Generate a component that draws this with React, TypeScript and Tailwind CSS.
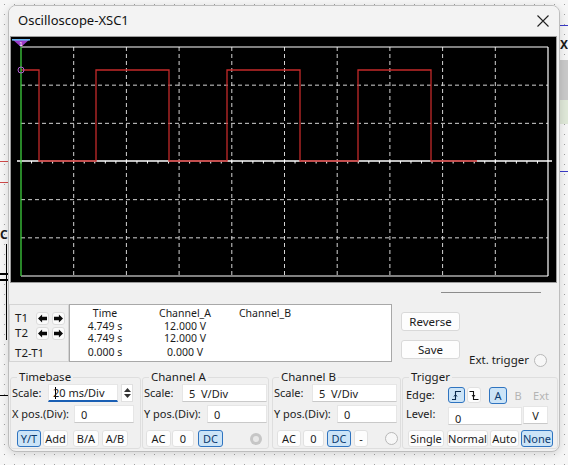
import React from "react";

// grid geometry inside the black screen (coords relative to screen origin 10,36)
const GX0 = 11;
const GX1 = 538;
const GY0 = 11;
const GY1 = 240;
const AXIS_Y = 125;

const vLines = Array.from({ length: 9 }, (_, i) => GX0 + ((i + 1) * (GX1 - GX0)) / 10);
const hLines = [1, 2, 4, 5].map((j) => GY0 + (j * (GY1 - GY0)) / 6);
const ticks = Array.from({ length: 50 }, (_, i) => GX0 + (i * (GX1 - GX0)) / 50);

const wave =
  "11,34 29,34 29,125 86,125 86,34 159,34 159,125 217,125 217,34 290,34 290,125 348,125 348,34 421,34 421,125 467,125";

function Screen() {
  return (
    <div className="w-[547px] h-[247px] ml-px bg-black border border-[#9c9c9c]">
      <svg width="545" height="245" viewBox="1 1 545 245" className="block">
        {vLines.map((x) => (
          <line key={x} x1={x} y1={GY0} x2={x} y2={GY1} stroke="#d4d4d4" strokeWidth="1" strokeDasharray="4 3" />
        ))}
        {hLines.map((y) => (
          <line key={y} x1={GX0} y1={y} x2={GX1} y2={y} stroke="#d4d4d4" strokeWidth="1" strokeDasharray="4 3" />
        ))}
        <line x1={GX0} y1={GY0} x2={GX1} y2={GY0} stroke="#ffffff" strokeWidth="1.2" />
        <line x1={GX1} y1={GY0} x2={GX1} y2={GY1} stroke="#ffffff" strokeWidth="1.2" />
        <line x1={GX0} y1={GY1} x2={GX1} y2={GY1} stroke="#ffffff" strokeWidth="1.2" />
        <line x1="7" y1={AXIS_Y} x2="542" y2={AXIS_Y} stroke="#ffffff" strokeWidth="1.3" />
        {ticks.map((x) => (
          <line key={x} x1={x} y1={AXIS_Y} x2={x} y2={AXIS_Y + 2.5} stroke="#ffffff" strokeWidth="1" />
        ))}
        <polyline points={wave} fill="none" stroke="#c42a2a" strokeWidth="1.3" />
        <line x1={GX0} y1="6" x2={GX0} y2={GY1} stroke="#3fcf3f" strokeWidth="1.3" />
        <circle cx={GX0} cy="34" r="3" fill="none" stroke="#b060d0" strokeWidth="1" />
        <polygon points="2,3 20,3 11,11" fill="#9a3cc8" />
        <rect x="2" y="3" width="18" height="1.6" fill="#6ab6f0" />
        <text x="11" y="9.5" fontSize="6" fill="#ffffff" textAnchor="middle" fontFamily="Liberation Sans, sans-serif">
          1
        </text>
      </svg>
    </div>
  );
}

function Arrow({ dir }: { dir: "l" | "r" }) {
  return (
    <div className="w-[13px] h-[13px] rounded-[3px] bg-[#fbfbfb] border border-[#dcdcdc] flex items-center justify-center">
      <svg width="9" height="9" viewBox="0 0 11 10">
        {dir === "l" ? (
          <polygon points="0,5 5,0 5,3 11,3 11,7 5,7 5,10" fill="#0a0a0a" />
        ) : (
          <polygon points="11,5 6,0 6,3 0,3 0,7 6,7 6,10" fill="#0a0a0a" />
        )}
      </svg>
    </div>
  );
}

function Btn({ children, w, on, dim }: { children: React.ReactNode; w: string; on?: boolean; dim?: boolean }) {
  return (
    <div
      className={`${w} h-[17px] rounded-[3px] border flex items-center justify-center text-[11px] leading-none whitespace-nowrap ${
        on
          ? "bg-[#cce4f7] border-[#2f74c0] text-[#0b3a6e]"
          : dim
          ? "bg-[#f0f0f0] border-[#f0f0f0] text-[#b4b4b4]"
          : "bg-[#fdfdfd] border-[#e1e1e1] text-[#1a1a1a]"
      }`}
    >
      {children}
    </div>
  );
}

function Field({ w, children, focus }: { w: string; children?: React.ReactNode; focus?: boolean }) {
  return (
    <div
      className={`${w} h-[18px] bg-white border border-[#e6e6e6] flex items-center pl-[6px] text-[11px] leading-none whitespace-nowrap ${
        focus ? "border-b-2 border-b-[#1a5fb4]" : "border-b-[#c9c9c9]"
      }`}
    >
      {children}
    </div>
  );
}

function Group({ title, w, children }: { title: string; w: string; children: React.ReactNode }) {
  return (
    <fieldset className={`${w} h-[80px] border border-[#dedede] rounded-[3px] pl-px pr-px`}>
      <legend className="ml-[5px] px-[2px] text-[11.5px] leading-[16px]">{title}</legend>
      <div className="-mt-px flex flex-col">{children}</div>
    </fieldset>
  );
}

function Radio({ gray }: { gray?: boolean }) {
  return gray ? (
    <div className="w-[12px] h-[12px] rounded-full bg-[#c6c6c6] flex items-center justify-center">
      <div className="w-[6px] h-[6px] rounded-full bg-[#e8e8e8]" />
    </div>
  ) : (
    <div className="w-[13px] h-[13px] rounded-full bg-[#f7f7f7] border border-[#b8b8b8]" />
  );
}

// dotted schematic canvas behind the window
function Canvas() {
  return (
    <svg className="absolute inset-0" width="568" height="465">
      <defs>
        <pattern id="dots" width="10" height="10" patternUnits="userSpaceOnUse">
          <rect x="4" y="4" width="1" height="1" fill="#a0a0a0" />
        </pattern>
      </defs>
      <rect width="568" height="465" fill="#f6f6f6" />
      <rect width="568" height="465" fill="url(#dots)" />
      <line x1="0" y1="161.5" x2="10" y2="161.5" stroke="#d04a4a" />
      <line x1="0" y1="182.5" x2="10" y2="182.5" stroke="#d04a4a" />
      <line x1="6.5" y1="244" x2="6.5" y2="340" stroke="#000" />
      <line x1="0" y1="274" x2="10" y2="274" stroke="#000" strokeWidth="2" />
      <line x1="0" y1="280" x2="10" y2="280" stroke="#000" strokeWidth="2" />
      <line x1="0" y1="395.5" x2="10" y2="395.5" stroke="#000" />
      <line x1="560" y1="25.5" x2="568" y2="25.5" stroke="#3a3ac8" />
      <rect x="560" y="60" width="8" height="40" fill="#c9c9c9" />
      <rect x="560" y="100" width="8" height="24" fill="#dfe8d8" />
      <line x1="560" y1="171.5" x2="568" y2="171.5" stroke="#3a3ac8" />
    </svg>
  );
}

export default function App() {
  return (
    <div className="relative w-[568px] h-[465px] overflow-hidden bg-[#f6f6f6] pl-[8px] pt-[5px] font-['Noto_Sans',sans-serif] text-[11px] text-[#1b1b1b]">
      <Canvas />
      <div className="absolute left-0 top-[229px] text-[12px] font-bold leading-none">C</div>
      <div className="absolute left-[560px] top-[39px] text-[12px] font-bold leading-none">X</div>

      {/* oscilloscope window */}
      <div className="relative w-[552px] h-[447px] rounded-[8px] border border-[#bdbdbd] bg-[#f0f0f0] shadow-[0_2px_8px_rgba(0,0,0,0.14)] flex flex-col overflow-hidden">
        <div className="h-[30px] flex items-center justify-between pl-[9px] pr-[10px] bg-[#f3f3f3]">
          <span className="text-[13px] text-[#111]">Oscilloscope-XSC1</span>
          <svg width="12" height="12" viewBox="0 0 12 12">
            <path d="M0.5 0.5 11.5 11.5 M11.5 0.5 0.5 11.5" stroke="#222" strokeWidth="1.1" />
          </svg>
        </div>

        <Screen />

        <div className="h-[21px] flex justify-end">
          <div className="w-[100px] h-px bg-[#8c8c8c] mt-[9px] mr-[18px]" />
        </div>

        <div className="h-[58px] flex">
          <div className="w-[60px] h-[58px] border border-[#d4d4d4] pl-[5px] pt-[6px] text-[11.5px]">
            <div className="h-[14px] flex items-center">
              <span className="w-[21px] leading-none">T1</span>
              <Arrow dir="l" />
              <div className="w-[3px]" />
              <Arrow dir="r" />
            </div>
            <div className="h-[14px] mt-px flex items-center">
              <span className="w-[21px] leading-none">T2</span>
              <Arrow dir="l" />
              <div className="w-[3px]" />
              <Arrow dir="r" />
            </div>
            <div className="h-[14px] mt-[6px] flex items-center leading-none">T2-T1</div>
          </div>
          <div className="w-[323px] h-[58px] bg-white border border-[#a8a8a8] pt-[2px] text-[10.5px] leading-[12.5px] flex">
            <div className="w-[70px] text-center">
              <div>Time</div>
              <div>4.749 s</div>
              <div>4.749 s</div>
              <div className="mt-px">0.000 s</div>
            </div>
            <div className="w-[90px] text-center">
              <div>Channel_A</div>
              <div>12.000 V</div>
              <div>12.000 V</div>
              <div className="mt-px">0.000 V</div>
            </div>
            <div className="w-[70px] text-center">
              <div>Channel_B</div>
            </div>
          </div>
          <div className="ml-[9px] w-[59px] pt-[8px] flex flex-col gap-[9px]">
            <div className="h-[19px] rounded-[3px] border border-[#d9d9d9] bg-[#fdfdfd] flex items-center justify-center text-[11.5px]">
              Reverse
            </div>
            <div className="h-[19px] rounded-[3px] border border-[#d9d9d9] bg-[#fdfdfd] flex items-center justify-center text-[11.5px]">
              Save
            </div>
          </div>
          <div className="ml-[9px] flex items-end">
            <div className="flex items-center gap-[5px] translate-y-[5px]">
              <span className="text-[11.5px] leading-[14px]">Ext. trigger</span>
              <Radio />
            </div>
          </div>
        </div>

        <div className="mt-[7px] flex pl-px">
          <Group title="Timebase" w="w-[131px]">
            <div className="h-[18px] flex items-center">
              <span className="w-[36px]">Scale:</span>
              <Field w="w-[70px]" focus>
                <span className="w-px h-[12px] bg-black -mr-[3px]" />
                <span>20 ms/Div</span>
              </Field>
              <div className="ml-[3px] w-[12px] h-[18px] bg-white border border-[#e0e0e0] flex flex-col items-center justify-center gap-[2px]">
                <svg width="7" height="4" viewBox="0 0 7 4"><polygon points="0,4 3.5,0 7,4" fill="#333" /></svg>
                <svg width="7" height="4" viewBox="0 0 7 4"><polygon points="0,0 7,0 3.5,4" fill="#333" /></svg>
              </div>
            </div>
            <div className="h-[18px] mt-[3px] flex items-center">
              <span className="w-[62px] whitespace-nowrap">X pos.(Div):</span>
              <Field w="w-[60px]">0</Field>
            </div>
            <div className="mt-[7px] flex items-center pl-[5px]">
              <Btn w="w-[24px]" on>Y/T</Btn>
              <div className="w-[2px]" />
              <Btn w="w-[25px]">Add</Btn>
              <div className="w-[5px]" />
              <Btn w="w-[26px]">B/A</Btn>
              <div className="w-[3px]" />
              <Btn w="w-[26px]">A/B</Btn>
            </div>
          </Group>

          <div className="w-px" />
          <Group title="Channel A" w="w-[127px]">
            <div className="h-[18px] flex items-center">
              <span className="w-[38px]">Scale:</span>
              <Field w="w-[85px]">5&nbsp;&nbsp;V/Div</Field>
            </div>
            <div className="h-[18px] mt-[3px] flex items-center">
              <span className="w-[63px] whitespace-nowrap">Y pos.(Div):</span>
              <Field w="w-[60px]">0</Field>
            </div>
            <div className="mt-[7px] flex items-center pl-[2px]">
              <Btn w="w-[25px]">AC</Btn>
              <div className="w-px" />
              <Btn w="w-[22px]">0</Btn>
              <div className="w-[4px]" />
              <Btn w="w-[25px]" on>DC</Btn>
              <div className="w-[27px]" />
              <Radio gray />
            </div>
          </Group>

          <div className="w-[3px]" />
          <Group title="Channel B" w="w-[129px]">
            <div className="h-[18px] flex items-center">
              <span className="w-[38px]">Scale:</span>
              <Field w="w-[85px]">5&nbsp;&nbsp;V/Div</Field>
            </div>
            <div className="h-[18px] mt-[3px] flex items-center">
              <span className="w-[63px] whitespace-nowrap">Y pos.(Div):</span>
              <Field w="w-[60px]">0</Field>
            </div>
            <div className="mt-[7px] flex items-center pl-[3px]">
              <Btn w="w-[24px]">AC</Btn>
              <div className="w-[2px]" />
              <Btn w="w-[21px]">0</Btn>
              <div className="w-[3px]" />
              <Btn w="w-[24px]" on>DC</Btn>
              <div className="w-[3px]" />
              <Btn w="w-[14px]">-</Btn>
              <div className="w-[17px]" />
              <Radio />
            </div>
          </Group>

          <div className="w-px" />
          <Group title="Trigger" w="w-[156px]">
            <div className="h-[18px] mt-[2px] flex items-center">
              <span className="w-[44px] pl-[2px]">Edge:</span>
              <div className="w-[17px] h-[16px] rounded-[3px] bg-[#cce4f7] border border-[#2f74c0] flex items-center justify-center">
                <svg width="11" height="11" viewBox="0 0 11 11">
                  <path d="M1 9.5 H4.5 V1.5 H10" fill="none" stroke="#0b2a4e" strokeWidth="1.1" />
                  <path d="M3 6.5 L4.5 4.5 L6 6.5" fill="none" stroke="#0b2a4e" strokeWidth="1" />
                </svg>
              </div>
              <div className="w-[2px]" />
              <div className="w-[14px] h-[16px] rounded-[3px] bg-[#fdfdfd] border border-[#e1e1e1] flex items-center justify-center">
                <svg width="10" height="11" viewBox="0 0 10 11">
                  <path d="M0.5 1.5 H4.5 V9.5 H9.5" fill="none" stroke="#111" strokeWidth="1.1" />
                  <path d="M3 5 L4.5 7 L6 5" fill="none" stroke="#111" strokeWidth="1" />
                </svg>
              </div>
              <div className="w-[8px]" />
              <Btn w="w-[18px]" on>A</Btn>
              <div className="w-[4px]" />
              <Btn w="w-[14px]" dim>B</Btn>
              <div className="w-[6px]" />
              <Btn w="w-[20px]" dim>Ext</Btn>
            </div>
            <div className="h-[18px] mt-[3px] flex items-center">
              <span className="w-[44px] pl-[2px] -mt-[4px]">Level:</span>
              <Field w="w-[74px]">
                <span className="translate-y-[2px]">0</span>
              </Field>
              <div className="w-px" />
              <div className="w-[25px] h-[18px] -mt-[2px] bg-white border border-[#e6e6e6] border-b-[#c9c9c9] flex items-center justify-center text-[11px] leading-none">
                V
              </div>
            </div>
            <div className="mt-[5px] flex items-center pl-[4px]">
              <Btn w="w-[36px]">Single</Btn>
              <div className="w-[3px]" />
              <Btn w="w-[41px]">Normal</Btn>
              <div className="w-[2px]" />
              <Btn w="w-[29px]">Auto</Btn>
              <div className="w-[2px]" />
              <Btn w="w-[32px]" on>None</Btn>
            </div>
          </Group>
        </div>
      </div>
    </div>
  );
}
